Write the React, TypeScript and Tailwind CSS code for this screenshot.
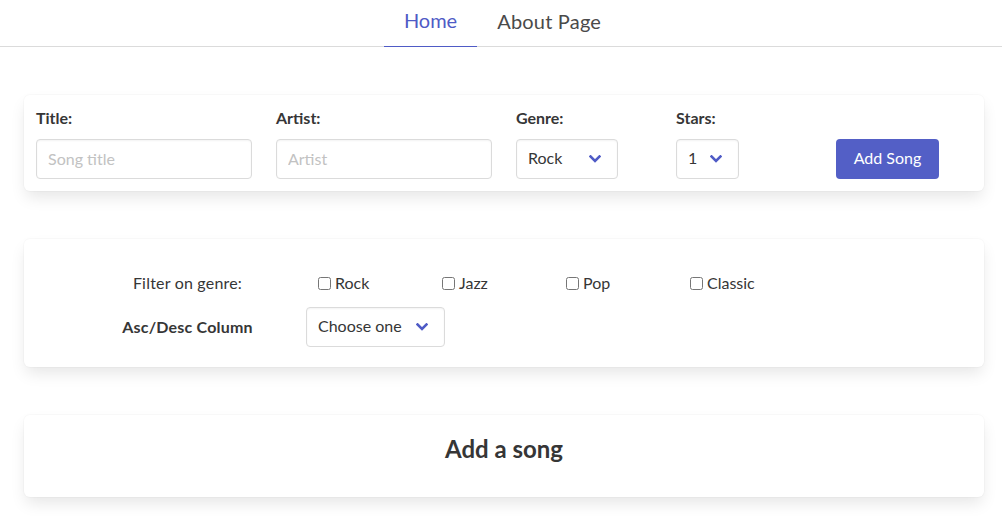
import React from "react";

const font = { fontFamily: '"Lato", "Noto Sans", sans-serif' };

const Chevron = () => (
    <svg className="pointer-events-none absolute right-[17px] top-1/2 -translate-y-1/2" width="12" height="8" viewBox="0 0 12 8">
        <polyline points="1.5,1.5 6,6 10.5,1.5" fill="none" stroke="#4f5bc6" strokeWidth="2.6" strokeLinecap="square" />
    </svg>
);

type SelectProps = {
    width: string;
    options: string[];
};

const Select = ({ width, options }: SelectProps) => {
    return (
        <div className={`relative ${width}`}>
            <select
                style={font}
                className="w-full h-10 appearance-none rounded-[4px] border border-[#dbdbdb] bg-white pl-[11px] pr-10 pb-[2px] text-base text-[#363636] outline-none shadow-[inset_0_1px_2px_rgba(10,10,10,0.05)]"
            >
                {options.map((o) => (
                    <option key={o}>{o}</option>
                ))}
            </select>
            <Chevron />
        </div>
    );
};

const Box = ({ className, children }: { className?: string; children: React.ReactNode }) => (
    <div className={`w-[960px] ml-[24px] rounded-[6px] bg-white shadow-[0_8px_16px_-2px_rgba(10,10,10,0.1),0_0_0_1px_rgba(10,10,10,0.02)] ${className ?? ""}`}>
        {children}
    </div>
);

const Field = ({ label, width, children }: { label: string; width: string; children: React.ReactNode }) => (
    <div className={`${width} px-3 py-3`}>
        <label className="block font-bold text-base leading-[22px] pb-[2px] text-[#363636] mb-2">{label}</label>
        {children}
    </div>
);

const genres = ["Rock", "Jazz", "Pop", "Classic"];

export default function App() {
    return (
        <div style={font} className="min-h-screen bg-white text-[#363636]">
            <nav className="flex justify-center pl-[3px] border-b border-[#dbdbdb] h-[47px]">
                <a className="-mb-px flex items-center px-5 pb-[6px] h-[47px] text-xl text-[#4f5bc6] border-b border-[#4f5bc6] cursor-pointer">Home</a>
                <a className="-mb-px flex items-center px-5 pb-[6px] h-[47px] text-xl tracking-[0.2px] text-[#4a4a4a] cursor-pointer">About Page</a>
            </nav>

            <Box className="mt-12 flex">
                <Field label="Title:" width="w-[240px]">
                    <input
                        style={font}
                        placeholder="Song title"
                        className="w-full h-10 rounded-[4px] border border-[#dbdbdb] px-[11px] pb-[2px] text-base outline-none placeholder:text-[#c2c2c2] shadow-[inset_0_1px_2px_rgba(10,10,10,0.05)]"
                    />
                </Field>
                <Field label="Artist:" width="w-[240px]">
                    <input
                        style={font}
                        placeholder="Artist"
                        className="w-full h-10 rounded-[4px] border border-[#dbdbdb] px-[11px] pb-[2px] text-base outline-none placeholder:text-[#c2c2c2] shadow-[inset_0_1px_2px_rgba(10,10,10,0.05)]"
                    />
                </Field>
                <Field label="Genre:" width="w-[160px]">
                    <Select width="w-[102px]" options={genres} />
                </Field>
                <Field label="Stars:" width="w-[160px]">
                    <Select width="w-[63px]" options={["1", "2", "3", "4", "5"]} />
                </Field>
                <div className="w-[160px] px-3 py-3 flex flex-col">
                    <div className="h-6 mb-2" />
                    <button
                        style={font}
                        className="w-[103px] h-10 pb-[2px] rounded-[4px] bg-[#535fc6] text-white text-base"
                    >
                        Add Song
                    </button>
                </div>
            </Box>

            <Box className="mt-12 pt-6 pb-5 flex flex-col gap-1">
                <div className="flex items-center h-10">
                    <div className="ml-[76px] w-[175px] text-center text-base tracking-[0.2px]">Filter on genre:</div>
                    <div className="ml-[43px] flex">
                        {genres.map((g) => (
                            <label key={g} className="w-[124px] flex items-center text-base">
                                <input type="checkbox" className="m-0 mr-[4px] w-[13px] h-[13px]" />
                                {g}
                            </label>
                        ))}
                    </div>
                </div>
                <div className="flex items-center h-10">
                    <div className="ml-[76px] w-[175px] text-center text-base font-bold tracking-[0.2px]">Asc/Desc Column</div>
                    <div className="ml-[31px]">
                        <Select width="w-[139px]" options={["Choose one", "Title", "Artist", "Genre", "Stars"]} />
                    </div>
                </div>
            </Box>

            <Box className="mt-12 h-[82px] pt-[19px]">
                <h2 className="text-center text-2xl font-bold leading-[30px] text-[#363636]">Add a song</h2>
            </Box>
        </div>
    );
}
